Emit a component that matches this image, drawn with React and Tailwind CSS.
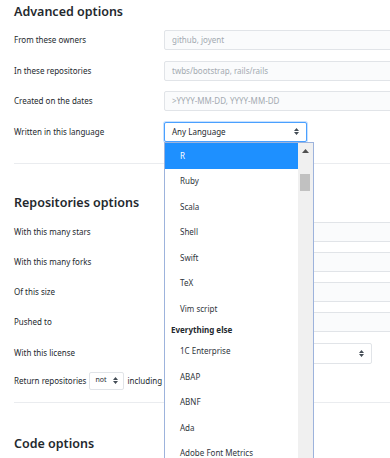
import React from 'react';

const font = { fontFamily: '"Noto Sans", "Open Sans", sans-serif' };

function Arrows() {
  return (
    <svg width="5" height="7" viewBox="0 0 5 7" className="shrink-0">
      <path d="M2.5 0 L5 3 H0 Z M0 4 H5 L2.5 7 Z" fill="#444d56" />
    </svg>
  );
}

function Field({ label, placeholder }) {
  return (
    <div className="flex items-center h-[20px]">
      <div className="w-[150px] shrink-0 text-[8px] text-[#24292e]">{label}</div>
      <div className="w-[300px] shrink-0 h-[20px] rounded-[2px] border border-[#e1e4e8] bg-[#fafbfc] flex items-center px-[7px] text-[8px] text-[#a3aab1]">
        {placeholder}
      </div>
    </div>
  );
}

const languages = ['R', 'Ruby', 'Scala', 'Shell', 'Swift', 'TeX', 'Vim script'];
const others = ['1C Enterprise', 'ABAP', 'ABNF', 'Ada', 'Adobe Font Metrics'];

function LanguageMenu() {
  return (
    <div className="absolute left-[164px] top-[142px] w-[150px] h-[330px] bg-white border border-[#9db3dc] flex">
      <div className="flex-1 flex flex-col">
        {languages.map((lang, i) => (
          <div
            key={lang}
            className={
              i === 0
                ? 'h-[25.5px] shrink-0 flex items-center pl-[15px] text-[8px] bg-[#1e90ff] text-white'
                : 'h-[25.5px] shrink-0 flex items-center pl-[15px] text-[8px] text-[#2f363d]'
            }
          >
            {lang}
          </div>
        ))}
        <div className="h-[17px] shrink-0 flex items-center pl-[6px] text-[8px] font-bold text-[#24292e]">Everything else</div>
        {others.map((lang) => (
          <div key={lang} className="h-[25.5px] shrink-0 flex items-center pl-[15px] text-[8px] text-[#2f363d]">
            {lang}
          </div>
        ))}
      </div>
      <div className="w-[15px] shrink-0 bg-[#f0f0f0] relative">
        <svg width="7" height="4" viewBox="0 0 7 4" className="absolute left-[4px] top-[6px]">
          <path d="M3.5 0 L7 4 H0 Z" fill="#505050" />
        </svg>
        <div className="absolute left-[2px] top-[31px] w-[10px] h-[17px] bg-[#c1c1c1]" />
      </div>
    </div>
  );
}

export default function App() {
  return (
    <div className="relative w-[390px] h-[458px] overflow-hidden bg-white" style={font}>
      <div className="pl-[14px]">
        <h2 className="h-[24px] leading-[24px] text-[12.5px] font-semibold text-[#24292e]">Advanced options</h2>
        <div className="mt-[6px] flex flex-col gap-[10.5px]">
          <Field label="From these owners" placeholder="github, joyent" />
          <Field label="In these repositories" placeholder="twbs/bootstrap, rails/rails" />
          <Field label="Created on the dates" placeholder=">YYYY-MM-DD, YYYY-MM-DD" />
          <div className="flex items-center h-[20px]">
            <div className="w-[150px] shrink-0 text-[8px] text-[#24292e]">Written in this language</div>
            <div className="w-[143px] h-[20px] rounded-[2px] border border-[#4aa0ff] shadow-[0_0_0_1px_#c8e1ff] bg-white flex items-center justify-between px-[7px] text-[8px] text-[#24292e]">
              Any Language
              <Arrows />
            </div>
          </div>
        </div>

        <div className="mt-[21px] border-t border-[#eaecef]" />

        <h2 className="mt-[27px] h-[24px] leading-[24px] text-[12.5px] font-semibold text-[#24292e]">Repositories options</h2>
        <div className="mt-[7px] flex flex-col gap-[10.3px]">
          <Field label="With this many stars" placeholder="" />
          <Field label="With this many forks" placeholder="" />
          <Field label="Of this size" placeholder="" />
          <Field label="Pushed to" placeholder="" />
          <div className="flex items-center h-[21px]">
            <div className="w-[150px] shrink-0 text-[8px] text-[#24292e]">With this license</div>
            <div className="w-[208px] h-[21px] rounded-[2px] border border-[#e1e4e8] bg-white flex items-center justify-end px-[7px]">
              <Arrows />
            </div>
          </div>
        </div>
        <div className="mt-[8px] flex items-center h-[18px] text-[8px] text-[#24292e]">
          <span>Return repositories</span>
          <div className="ml-[3px] w-[35px] h-[18px] rounded-[2px] border border-[#e1e4e8] bg-white flex items-center justify-between pl-[5px] pr-[5px] text-[7px]">
            not
            <Arrows />
          </div>
          <span className="ml-[3px]">including</span>
        </div>

        <div className="mt-[12px] border-t border-[#eaecef]" />

        <h2 className="mt-[29px] h-[24px] leading-[24px] text-[12.5px] font-semibold text-[#24292e]">Code options</h2>
      </div>
      <LanguageMenu />
    </div>
  );
}
